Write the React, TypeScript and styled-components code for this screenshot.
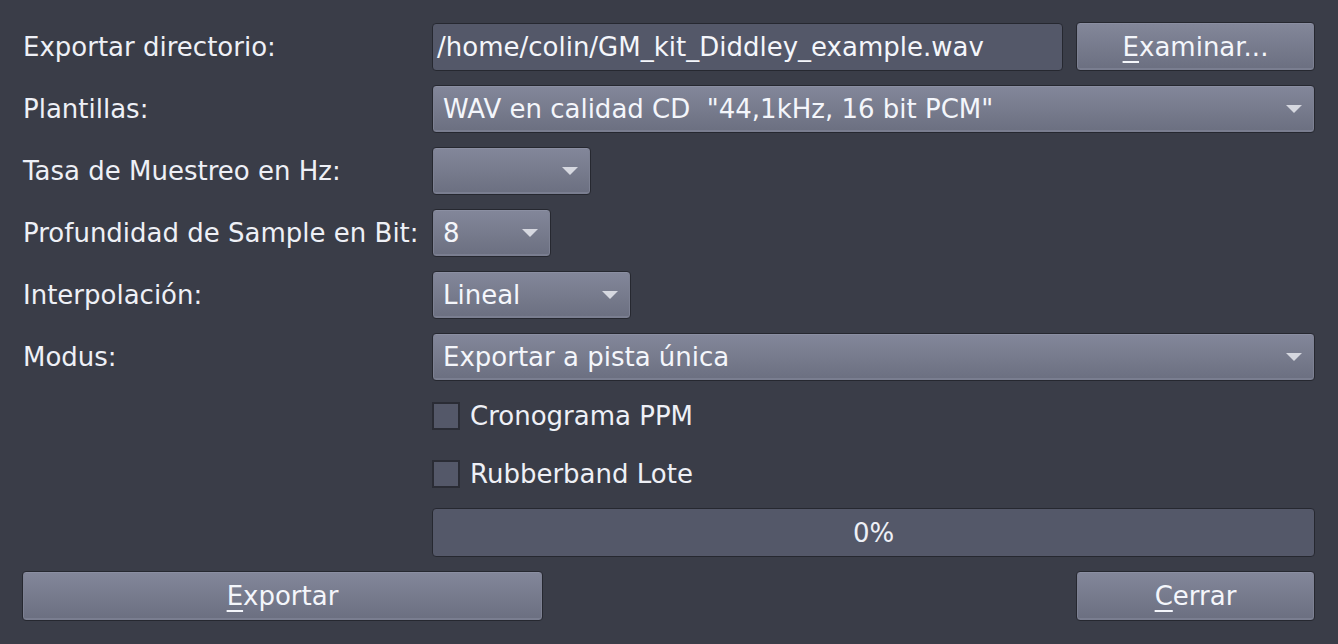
import React, { FC } from 'react';
import styled, { createGlobalStyle } from 'styled-components';

const GlobalStyle = createGlobalStyle`
    html, body {
        margin: 0;
        padding: 0;
        background: #3a3d48;
    }
    body {
        font-family: "DejaVu Sans", "Liberation Sans", sans-serif;
        font-size: 26px;
        color: #eef0f6;
    }
`;

const Dialog = styled.div`
    width: 1338px;
    height: 644px;
    box-sizing: border-box;
    padding: 22px 23px 0 22px;
    background: #3a3d48;
`;

const Form = styled.div`
    display: grid;
    grid-template-columns: 410px 1fr;
    row-gap: 14px;
    align-items: center;
`;

const Label = styled.div`
    padding-left: 1px;
    white-space: nowrap;
    line-height: 48px;
`;

const FieldRow = styled.div`
    display: flex;
    gap: 13px;
    align-items: center;
`;

const LineEdit = styled.div`
    flex: 1;
    height: 48px;
    box-sizing: border-box;
    border: 1px solid #262830;
    border-radius: 4px;
    background: #545869;
    padding: 0 4px;
    display: flex;
    align-items: center;
    color: #f4f6fb;
`;

const raised = `
    box-sizing: border-box;
    border: 1px solid #262830;
    border-radius: 4px;
    background: linear-gradient(#83879a, #6b6f80);
    box-shadow: inset 0 1px 0 #8b8fa2, inset 0 -2px 0 #7a7e90, inset 1px 0 0 #7d8193, inset -1px 0 0 #7d8193;
    color: #f4f6fb;
`;

const Combo = styled.div<{ $width?: number }>`
    ${raised}
    height: 48px;
    width: ${p => (p.$width ? `${p.$width}px` : 'auto')};
    display: flex;
    align-items: center;
    padding: 0 12px 0 10px;
`;

const ComboText = styled.span`
    flex: 1;
    white-space: pre;
`;

const Arrow = styled.span`
    width: 0;
    height: 0;
    border-left: 8px solid transparent;
    border-right: 8px solid transparent;
    border-top: 8px solid #d6d8e0;
    margin-left: 8px;
`;

const Button = styled.div<{ $width: number; $height?: number }>`
    ${raised}
    width: ${p => p.$width}px;
    height: ${p => p.$height ?? 49}px;
    display: flex;
    align-items: center;
    justify-content: center;
`;

const Mnemonic = styled.span`
    text-decoration: underline;
    text-decoration-thickness: 2px;
    text-underline-offset: 5px;
`;

const CheckRow = styled.label`
    display: flex;
    align-items: center;
    gap: 10px;
    height: 42px;
`;

const CheckBox = styled.span`
    width: 28px;
    height: 28px;
    box-sizing: border-box;
    border: 2px solid #2a2c35;
    background: #545869;
`;

const Checks = styled.div`
    display: flex;
    flex-direction: column;
    gap: 16px;
`;

const Progress = styled.div`
    height: 49px;
    box-sizing: border-box;
    border: 1px solid #262830;
    border-radius: 4px;
    background: #545869;
    display: flex;
    align-items: center;
    justify-content: center;
    margin-top: -1px;
`;

const Footer = styled.div`
    display: flex;
    justify-content: space-between;
    margin-top: 14px;
`;

const Blank = styled.div``;

const App: FC = () => {
    return (
        <Dialog>
            <GlobalStyle />
            <Form>
                <Label>Exportar directorio:</Label>
                <FieldRow>
                    <LineEdit>/home/colin/GM_kit_Diddley_example.wav</LineEdit>
                    <Button $width={239}><Mnemonic>E</Mnemonic>xaminar...</Button>
                </FieldRow>

                <Label>Plantillas:</Label>
                <Combo>
                    <ComboText>WAV en calidad CD  "44,1kHz, 16 bit PCM"</ComboText>
                    <Arrow />
                </Combo>

                <Label>Tasa de Muestreo en Hz:</Label>
                <Combo $width={159}>
                    <ComboText></ComboText>
                    <Arrow />
                </Combo>

                <Label>Profundidad de Sample en Bit:</Label>
                <Combo $width={119}>
                    <ComboText>8</ComboText>
                    <Arrow />
                </Combo>

                <Label>Interpolación:</Label>
                <Combo $width={199}>
                    <ComboText>Lineal</ComboText>
                    <Arrow />
                </Combo>

                <Label>Modus:</Label>
                <Combo>
                    <ComboText>Exportar a pista única</ComboText>
                    <Arrow />
                </Combo>

                <Blank />
                <Checks>
                    <CheckRow><CheckBox />Cronograma PPM</CheckRow>
                    <CheckRow><CheckBox />Rubberband Lote</CheckRow>
                </Checks>

                <Blank />
                <Progress>0%</Progress>
            </Form>
            <Footer>
                <Button $width={521} $height={50}><Mnemonic>E</Mnemonic>xportar</Button>
                <Button $width={239} $height={50}><Mnemonic>C</Mnemonic>errar</Button>
            </Footer>
        </Dialog>
    );
};

export default App;
